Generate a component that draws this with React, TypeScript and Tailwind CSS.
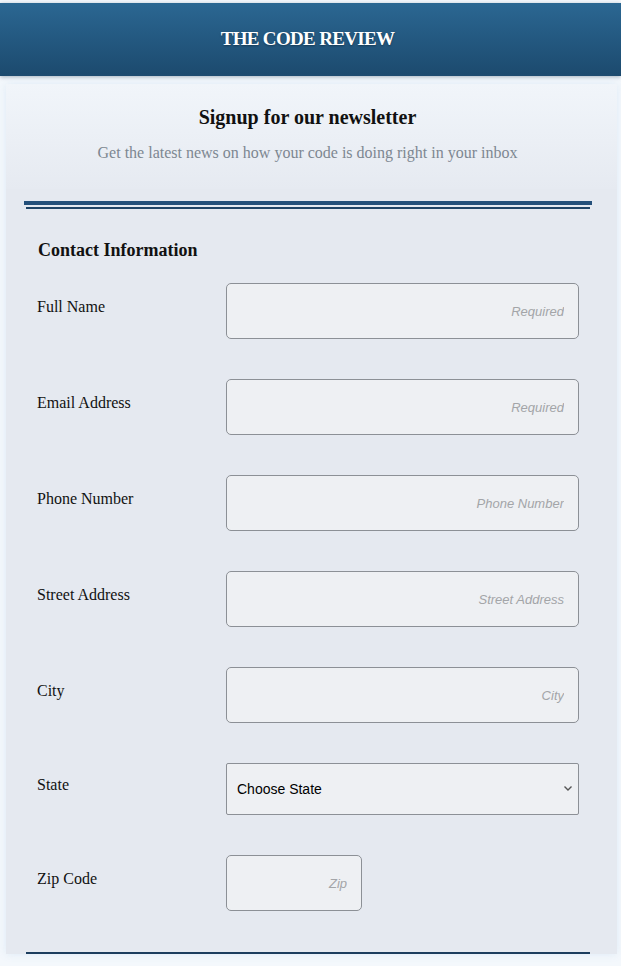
import React from "react";

const fields = [
  { label: "Full Name", placeholder: "Required" },
  { label: "Email Address", placeholder: "Required" },
  { label: "Phone Number", placeholder: "Phone Number" },
  { label: "Street Address", placeholder: "Street Address" },
  { label: "City", placeholder: "City" },
];

function Label({ children }: { children: React.ReactNode }) {
  return (
    <div className="w-[200px] shrink-0 pl-[11px] mb-[8px] text-[16px] text-[#111] leading-none">
      {children}
    </div>
  );
}

export default function App() {
  return (
    <div
      className="min-h-screen bg-[#f4f8fc] pt-[3px]"
      style={{ fontFamily: '"Liberation Serif", "Times New Roman", serif' }}
    >
      <header className="h-[73px] pr-[6px] bg-gradient-to-b from-[#2b6792] to-[#1c4a6e] flex items-center justify-center shadow-[0_1px_4px_rgba(20,50,80,0.35)]">
        <h1 className="text-white font-bold text-[19px] tracking-[-0.035em] [text-shadow:0_1px_2px_rgba(0,0,0,0.35)]">
          THE CODE REVIEW
        </h1>
      </header>

      <main className="ml-[6px] mr-[4px] mt-[8px] bg-[#e5e9f0] shadow-[0_0_8px_rgba(220,232,245,0.9)]">
        <section className="bg-gradient-to-b from-[#f1f5fa] to-[#e6eaf1] pt-[21px] pb-[26px] pr-[8px] text-center">
          <h2 className="text-[20px] font-bold text-[#111] leading-[24px]">Signup for our newsletter</h2>
          <p className="mt-[14px] text-[16px] text-[#7d8791] leading-[20px]">
            Get the latest news on how your code is doing right in your inbox
          </p>
        </section>

        <div className="mt-[12px] ml-[18px] mr-[25px] h-[4px] bg-[#24507a]" />
        <div className="mt-[2px] ml-[20px] mr-[27px] h-[2px] bg-[#1f4466]" />

        <div className="ml-[20px] mr-[27px] border-b-[2px] border-[#1c3d5e] pb-[41px]">
          <h3 className="mt-[30px] pl-[12px] text-[18px] font-bold text-[#111] leading-[22px]">
            Contact Information
          </h3>

          <div className="mt-[22px] flex flex-col gap-[40px]">
            {fields.map((f) => (
              <div key={f.label} className="flex items-center">
                <Label>{f.label}</Label>
                <input
                  placeholder={f.placeholder}
                  className="w-[353px] h-[56px] rounded-[5px] border border-[#8c9096] bg-[#eef0f3] px-[14px] text-right text-[13px] placeholder:italic placeholder:text-[#a3a5a8] outline-none"
                  style={{ fontFamily: '"Liberation Sans", Arial, sans-serif' }}
                />
              </div>
            ))}

            <div className="flex items-center">
              <Label>State</Label>
              <div className="relative w-[353px] h-[52px]">
                <select
                  className="appearance-none w-full h-full rounded-[2px] border border-[#8c9096] bg-[#eef0f3] pl-[10px] text-[14px] text-black outline-none"
                  style={{ fontFamily: '"Liberation Sans", Arial, sans-serif' }}
                  defaultValue=""
                >
                  <option value="">Choose State</option>
                </select>
                <svg
                  className="absolute right-[6px] top-[22px] pointer-events-none"
                  width="10"
                  height="7"
                  viewBox="0 0 10 7"
                  fill="none"
                >
                  <path d="M1.5 1.5 L5 5 L8.5 1.5" stroke="#555" strokeWidth="1.4" />
                </svg>
              </div>
            </div>

            <div className="flex items-center">
              <Label>Zip Code</Label>
              <input
                placeholder="Zip"
                className="w-[136px] h-[56px] rounded-[5px] border border-[#8c9096] bg-[#eef0f3] px-[14px] text-right text-[13px] placeholder:italic placeholder:text-[#a3a5a8] outline-none"
                style={{ fontFamily: '"Liberation Sans", Arial, sans-serif' }}
              />
            </div>
          </div>
        </div>
      </main>
    </div>
  );
}
